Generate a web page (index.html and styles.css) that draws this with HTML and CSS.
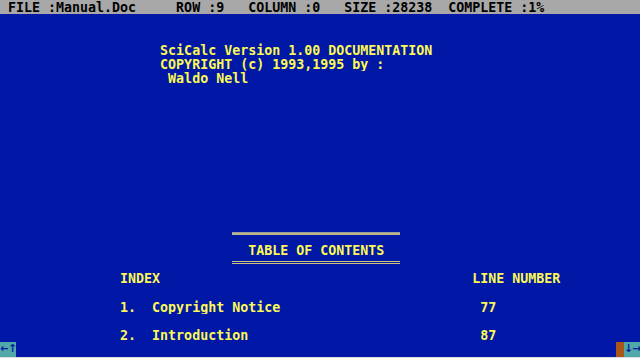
FILE: index.html
```html
<!DOCTYPE html>
<html lang="en">
<head>
  <meta charset="UTF-8" />
  <meta name="viewport" content="width=device-width, initial-scale=1.0"/>
  <title>Manual.Doc</title>
  <link rel="stylesheet" href="styles.css">
</head>
<body>
  <div class="screen">
    <!-- status line -->
    <div class="row status"> FILE :Manual.Doc     ROW :9   COLUMN :0   SIZE :28238  COMPLETE :1%</div>

    <div class="row"></div>
    <div class="row"></div>
    <div class="row">                    SciCalc Version 1.00 DOCUMENTATION</div>
    <div class="row">                    COPYRIGHT (c) 1993,1995 by :</div>
    <div class="row">                     Waldo Nell</div>
    <div class="row"></div>
    <div class="row"></div>
    <div class="row"></div>
    <div class="row"></div>
    <div class="row"></div>
    <div class="row"></div>
    <div class="row"></div>
    <div class="row"></div>
    <div class="row"></div>
    <div class="row"></div>

    <!-- table of contents box -->
    <div class="row"><div class="rule rule-top"></div></div>
    <div class="row">                               TABLE OF CONTENTS</div>
    <div class="row"><div class="rule rule-double"></div></div>

    <div class="row">               INDEX                                       LINE NUMBER</div>
    <div class="row"></div>
    <div class="row">               1.  Copyright Notice                         77</div>
    <div class="row"></div>
    <div class="row">               2.  Introduction                             87</div>

    <!-- scroll hints -->
    <div class="row bottom">
      <span class="key"><span class="arrow">←</span><span class="arrow">↑</span></span>
      <span class="right">
        <span class="mark"></span>
        <span class="key"><span class="arrow">↓</span><span class="arrow">→</span></span>
      </span>
    </div>
  </div>
  <div class="edge"></div>
</body>
</html>
```

FILE: styles.css
```css
body {
  margin: 0;
  width: 640px;
  height: 358px;
  overflow: hidden;
  background-color: #0118a6;
  font-family: "DejaVu Sans Mono", "Liberation Mono", monospace;
  font-weight: bold;
  font-size: 13.3px;
  color: #fcf854;
}
.screen {
  display: grid;
  grid-template-rows: repeat(25, 14.28px);
}
.row {
  white-space: pre;
  line-height: 14.28px;
  padding-top: 1px;
  height: 14.28px;
  box-sizing: border-box;
  overflow: hidden;
}
.status {
  background-color: #a8a8a8;
  color: #000;
}
.rule {
  margin-left: 232px;
  width: 168px;
}
.rule-top {
  margin-top: 3px;
  height: 3px;
  background: linear-gradient(#9c9c9c 0 1px, #bab58a 1px 3px);
}
.rule-double {
  margin-top: 3px;
  height: 1px;
  border-top: 1px solid #c8c27a;
  border-bottom: 1px solid #c8c27a;
}
.bottom {
  display: flex;
  justify-content: space-between;
  padding-top: 0;
  color: #0a1aa0;
}
.key {
  display: flex;
  background-color: #50a8a8;
  width: 16px;
  height: 100%;
}
.arrow {
  width: 8px;
  text-align: center;
  font-family: "DejaVu Sans", sans-serif;
  font-size: 11px;
  line-height: 14px;
  overflow: hidden;
}
.right {
  display: flex;
  height: 100%;
}
.mark {
  width: 8px;
  height: 100%;
  background-color: #aa5616;
}
.edge {
  height: 1px;
  background-color: #dcdcdc;
}
```
